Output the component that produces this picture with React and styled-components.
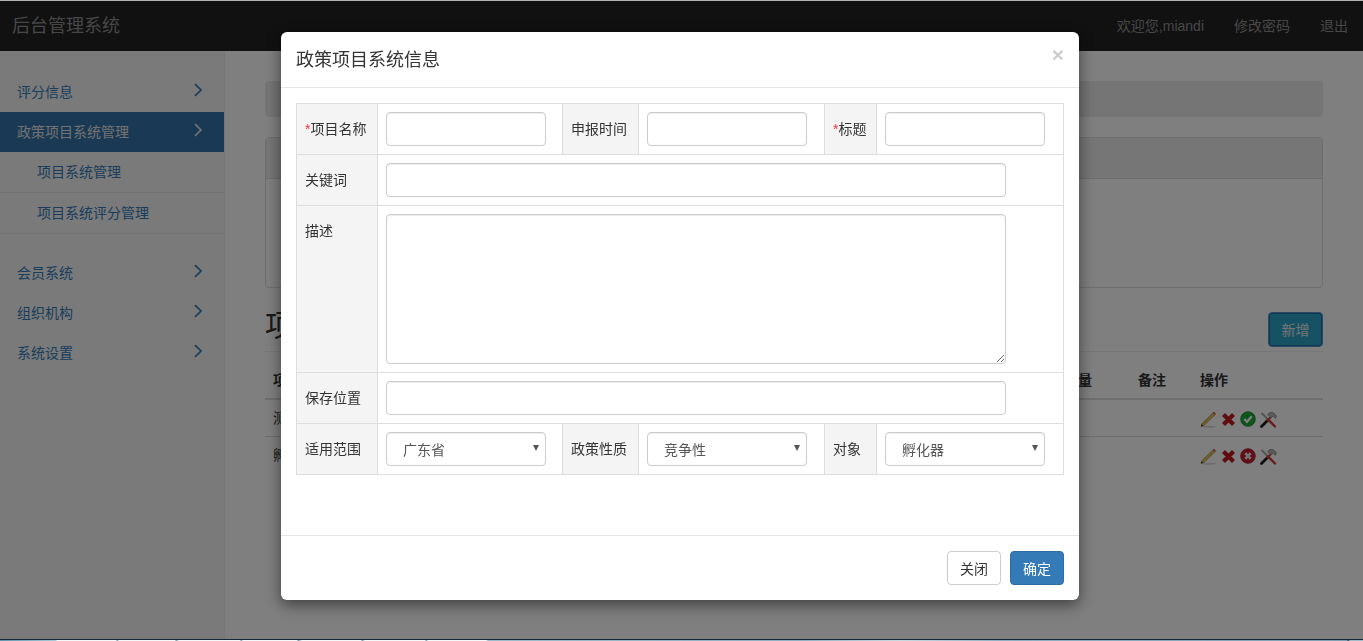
import React from 'react';
import styled, { createGlobalStyle } from 'styled-components';

const FONT = '"Liberation Sans", "Noto Sans CJK SC", sans-serif';

const GlobalStyle = createGlobalStyle`
  * {
    box-sizing: border-box;
  }
  html, body {
    margin: 0;
    height: 100%;
    overflow: hidden;
  }
  body {
    font-family: ${FONT};
    font-size: 14px;
    line-height: 20px;
    color: #333;
    background: #fff;
  }
`;

const TopEdge = styled.div`
  height: 1px;
  background: #b4b4b4;
`;

const Navbar = styled.header`
  display: flex;
  align-items: center;
  justify-content: space-between;
  height: 50px;
  background: #222;
`;

const Brand = styled.div`
  padding-left: 12px;
  font-size: 18px;
  color: #8f8f8f;
`;

const NavLinks = styled.nav`
  display: flex;
`;

const NavLink = styled.a`
  padding: 0 15px;
  color: #8f8f8f;
`;

const Layout = styled.div`
  display: flex;
  height: 588px;
`;

const Sidebar = styled.aside`
  flex: 0 0 225px;
  padding-top: 21px;
  background: #f5f5f5;
  border-right: 1px solid #eee;
`;

const SideItem = styled.a`
  display: flex;
  align-items: center;
  justify-content: space-between;
  height: 40px;
  padding: 0 21px 0 17px;
  color: ${(p) => (p.$active ? '#e4e4e4' : '#337ab7')};
  background: ${(p) => (p.$active ? '#3272a8' : 'transparent')};
`;

const ChevronMark = styled.svg`
  margin-top: -4px;
`;

const SubList = styled.div`
  margin-bottom: 19px;
`;

const SubItem = styled.a`
  display: flex;
  align-items: center;
  height: 41px;
  padding-left: 37px;
  color: #337ab7;
  border-bottom: 1px solid #e7e7e7;
`;

const Main = styled.main`
  flex: 1;
  padding: 30px 40px 0;
`;

const Breadcrumb = styled.div`
  height: 36px;
  margin-bottom: 20px;
  background: #eaeaea;
  border-radius: 4px;
`;

const Panel = styled.section`
  height: 151px;
  border: 1px solid #ddd;
  border-radius: 4px;
`;

const PanelHeading = styled.div`
  height: 41px;
  background: #ececec;
  border-bottom: 1px solid #ddd;
`;

const PageHeader = styled.div`
  display: flex;
  align-items: flex-start;
  justify-content: space-between;
  height: 64px;
  margin-bottom: 10px;
  padding-top: 18px;
  border-bottom: 1px solid #eee;
`;

const PageTitle = styled.h1`
  margin: 0;
  font-size: 30px;
  font-weight: 400;
  line-height: 40px;
`;

const AddButton = styled.button`
  width: 55px;
  height: 35px;
  margin-top: 6px;
  padding: 0;
  font: inherit;
  color: #e8e8e8;
  background: #2ea5c8;
  border: 1px solid #5b8fd0;
  border-radius: 4px;
  box-shadow: inset 0 0 0 1px #1f6fa0;
`;

const DataTable = styled.table`
  width: 100%;
  border-collapse: collapse;
  table-layout: fixed;
`;

const HeadCell = styled.th`
  width: ${(p) => p.$width}px;
  padding: 8px;
  font-weight: 700;
  text-align: left;
  border-bottom: 2px solid #ddd;
`;

const BodyCell = styled.td`
  height: 37px;
  padding: 8px;
  border-top: 1px solid #ddd;
  &:empty {
    padding: 0;
  }
`;

const ActionIcons = styled.div`
  display: flex;
  align-items: center;
  gap: 4px;
  margin-top: 2px;
`;

const Overlay = styled.div`
  position: fixed;
  inset: 1px 0 2px;
  background: rgba(0, 0, 0, 0.5);
`;

const Modal = styled.div`
  position: absolute;
  top: 31px;
  left: 281px;
  display: flex;
  flex-direction: column;
  width: 798px;
  height: 568px;
  background: #fff;
  border-radius: 6px;
  box-shadow: 0 5px 15px rgba(0, 0, 0, 0.5);
`;

const ModalHeader = styled.div`
  display: flex;
  align-items: center;
  justify-content: space-between;
  height: 56px;
  padding: 0 15px;
  border-bottom: 1px solid #e5e5e5;
`;

const ModalTitle = styled.h4`
  margin: 0;
  font-size: 18px;
  font-weight: 400;
`;

const CloseMark = styled.span`
  margin: -10px 0 0;
  font-size: 21px;
  font-weight: 700;
  color: #000;
  opacity: 0.2;
`;

const ModalBody = styled.div`
  flex: 1;
  padding: 15px;
`;

const FormTable = styled.table`
  width: 767px;
  border-collapse: collapse;
  table-layout: fixed;
`;

const Cell = styled.td`
  padding: 8px;
  vertical-align: top;
  border: 1px solid #ddd;
`;

const LabelCell = styled(Cell)`
  background: #f4f4f4;
`;

const Label = styled.div`
  padding-top: 7px;
  white-space: nowrap;
`;

const Required = styled.span`
  color: #e33;
`;

const fieldStyle = `
  display: block;
  height: 34px;
  padding: 6px 12px;
  font-family: ${FONT};
  font-size: 14px;
  color: #555;
  background: #fff;
  border: 1px solid #ccc;
  border-radius: 4px;
  box-shadow: inset 0 1px 1px rgba(0, 0, 0, 0.075);
`;

const Input = styled.input`
  ${fieldStyle}
  width: ${(p) => (p.$wide ? 620 : 160)}px;
`;

const TextArea = styled.textarea`
  ${fieldStyle}
  width: 620px;
  height: 150px;
  resize: vertical;
`;

const SelectWrap = styled.div`
  position: relative;
  width: 160px;
  &::after {
    content: '';
    position: absolute;
    top: 13px;
    right: 7px;
    border-style: solid;
    border-width: 6px 3.5px 0;
    border-color: #555 transparent transparent;
    pointer-events: none;
  }
`;

const Select = styled.select`
  ${fieldStyle}
  width: 160px;
  padding: 8px 12px 6px 16px;
  appearance: none;
`;

const ModalFooter = styled.div`
  display: flex;
  justify-content: flex-end;
  gap: 9px;
  height: 65px;
  padding: 15px;
  border-top: 1px solid #e5e5e5;
`;

const Button = styled.button`
  width: 54px;
  height: 34px;
  padding: 0;
  font-family: ${FONT};
  font-size: 14px;
  color: ${(p) => (p.$primary ? '#fff' : '#333')};
  background: ${(p) => (p.$primary ? '#337ab7' : '#fff')};
  border: 1px solid ${(p) => (p.$primary ? '#2e6da4' : '#ccc')};
  border-radius: 4px;
`;

// sliver of the desktop taskbar along the bottom edge of the capture
const TaskStrip = styled.div`
  position: fixed;
  left: 0;
  right: 0;
  bottom: 0;
  height: 2px;
  border-top: 1px solid #16283a;
  background: linear-gradient(
    to right,
    #5f95ad 0,
    #a9cbd8 56px,
    #f4f8f9 57px,
    #f4f8f9 116px,
    #6f8fa0 117px,
    #f4f8f9 119px,
    #f4f8f9 175px,
    #6f8fa0 176px,
    #f4f8f9 179px,
    #f4f8f9 240px,
    #6f8fa0 241px,
    #f4f8f9 243px,
    #f4f8f9 297px,
    #6f8fa0 298px,
    #f4f8f9 302px,
    #f4f8f9 361px,
    #6f8fa0 362px,
    #f4f8f9 365px,
    #f4f8f9 425px,
    #6f8fa0 426px,
    #f4f8f9 428px,
    #f4f8f9 486px,
    #9dbccb 488px,
    #8fb0c2 800px,
    #c9d9e0 900px,
    #8fb0c2 1000px,
    #7f9fb2 1347px,
    #2a3a48 1348px,
    #a0bccb 1350px
  );
`;

const Chevron = () => (
  <ChevronMark width="10" height="14" viewBox="0 0 10 14" fill="none">
    <path d="M2 1.2 L8 7 L2 12.8" stroke="currentColor" strokeWidth="1.7" />
  </ChevronMark>
);

const PencilIcon = () => (
  <svg width="17" height="17" viewBox="0 0 17 17">
    <ellipse cx="9" cy="15.8" rx="7" ry="1" fill="#000" opacity="0.15" />
    <path d="M1 15.5 L2 12.5 L13 1.8 L15 3.8 L4 14.5 Z" fill="#d9bf5c" stroke="#85701f" strokeWidth="0.5" />
    <path d="M13 1.8 L14 0.8 L16 2.8 L15 3.8 Z" fill="#d9433f" />
    <path d="M1 15.5 L1.7 13.3 L3.2 14.8 Z" fill="#222" />
  </svg>
);

const CrossIcon = () => (
  <svg width="15" height="15" viewBox="0 0 15 15">
    <path d="M1.5 4 L4 1.5 L7.5 5 L11 1.5 L13.5 4 L10 7.5 L13.5 11 L11 13.5 L7.5 10 L4 13.5 L1.5 11 L5 7.5 Z" fill="#c8141e" stroke="#9c0f16" strokeWidth="0.8" strokeLinejoin="round" />
  </svg>
);

const StatusIcon = ({ ok }) => (
  <svg width="16" height="16" viewBox="0 0 16 16">
    <circle cx="8" cy="8" r="7.3" fill={ok ? '#1fa83a' : '#c81e2c'} stroke={ok ? '#14802a' : '#9c1420'} strokeWidth="0.8" />
    {ok ? (
      <path d="M4.3 8 L7 10.8 L11.8 5.3" fill="none" stroke="#fff" strokeWidth="2.2" />
    ) : (
      <path d="M5.2 5.2 L10.8 10.8 M10.8 5.2 L5.2 10.8" fill="none" stroke="#e8e8e8" strokeWidth="2.4" />
    )}
  </svg>
);

const ToolsIcon = () => (
  <svg width="17" height="17" viewBox="0 0 17 17">
    <path d="M1.5 2 L8 8.5" stroke="#a8a8a8" strokeWidth="2" />
    <path d="M8 8.5 L15 15.5" stroke="#d63a3a" strokeWidth="2.4" strokeLinecap="round" />
    <path d="M1.5 15.5 L7 10" stroke="#1c1c1c" strokeWidth="2.8" strokeLinecap="round" />
    <path d="M7 10 L11 6" stroke="#d63a3a" strokeWidth="2.2" />
    <path d="M7.5 3.5 C10 0.3 13.5 0.5 16.5 5 L15.5 7.5 L13 5.2 L10.5 6.8 Z" fill="#b4b4b4" stroke="#6a6a6a" strokeWidth="0.5" />
  </svg>
);

const Actions = ({ ok }) => (
  <ActionIcons>
    <PencilIcon />
    <CrossIcon />
    <StatusIcon ok={ok} />
    <ToolsIcon />
  </ActionIcons>
);

const columns = [
  { title: '项目名称', width: 110 },
  { title: '', width: 681 },
  { title: '数量', width: 74 },
  { title: '备注', width: 62 },
  { title: '操作', width: 131 },
];

const rows = [
  { name: '测试项目', ok: true },
  { name: '孵化项目', ok: false },
];

const Field = ({ label, required, children }) => (
  <>
    <LabelCell>
      <Label>
        {required && <Required>*</Required>}
        {label}
      </Label>
    </LabelCell>
    <Cell>{children}</Cell>
  </>
);

const Picker = ({ value }) => (
  <SelectWrap>
    <Select defaultValue={value}>
      <option>{value}</option>
    </Select>
  </SelectWrap>
);

export default function App() {
  return (
    <>
      <GlobalStyle />
      <TopEdge />
      <Navbar>
        <Brand>后台管理系统</Brand>
        <NavLinks>
          <NavLink>欢迎您,miandi</NavLink>
          <NavLink>修改密码</NavLink>
          <NavLink>退出</NavLink>
        </NavLinks>
      </Navbar>
      <Layout>
        <Sidebar>
          <SideItem>评分信息<Chevron /></SideItem>
          <SideItem $active>政策项目系统管理<Chevron /></SideItem>
          <SubList>
            <SubItem>项目系统管理</SubItem>
            <SubItem>项目系统评分管理</SubItem>
          </SubList>
          <SideItem>会员系统<Chevron /></SideItem>
          <SideItem>组织机构<Chevron /></SideItem>
          <SideItem>系统设置<Chevron /></SideItem>
        </Sidebar>
        <Main>
          <Breadcrumb />
          <Panel>
            <PanelHeading />
          </Panel>
          <PageHeader>
            <PageTitle>项目系统管理</PageTitle>
            <AddButton>新增</AddButton>
          </PageHeader>
          <DataTable>
            <thead>
              <tr>
                {columns.map((col) => (
                  <HeadCell key={col.width} $width={col.width}>{col.title}</HeadCell>
                ))}
              </tr>
            </thead>
            <tbody>
              {rows.map((row) => (
                <tr key={row.name}>
                  <BodyCell>{row.name}</BodyCell>
                  <BodyCell />
                  <BodyCell />
                  <BodyCell />
                  <BodyCell><Actions ok={row.ok} /></BodyCell>
                </tr>
              ))}
            </tbody>
          </DataTable>
        </Main>
      </Layout>
      <Overlay>
        <Modal>
          <ModalHeader>
            <ModalTitle>政策项目系统信息</ModalTitle>
            <CloseMark>×</CloseMark>
          </ModalHeader>
          <ModalBody>
            <FormTable>
              <colgroup>
                <col width="81" />
                <col width="185" />
                <col width="76" />
                <col width="186" />
                <col width="52" />
                <col width="187" />
              </colgroup>
              <tbody>
                <tr>
                  <Field label="项目名称" required><Input /></Field>
                  <Field label="申报时间"><Input /></Field>
                  <Field label="标题" required><Input /></Field>
                </tr>
                <tr>
                  <LabelCell><Label>关键词</Label></LabelCell>
                  <Cell colSpan={5}><Input $wide /></Cell>
                </tr>
                <tr>
                  <LabelCell><Label>描述</Label></LabelCell>
                  <Cell colSpan={5}><TextArea /></Cell>
                </tr>
                <tr>
                  <LabelCell><Label>保存位置</Label></LabelCell>
                  <Cell colSpan={5}><Input $wide /></Cell>
                </tr>
                <tr>
                  <Field label="适用范围"><Picker value="广东省" /></Field>
                  <Field label="政策性质"><Picker value="竞争性" /></Field>
                  <Field label="对象"><Picker value="孵化器" /></Field>
                </tr>
              </tbody>
            </FormTable>
          </ModalBody>
          <ModalFooter>
            <Button>关闭</Button>
            <Button $primary>确定</Button>
          </ModalFooter>
        </Modal>
      </Overlay>
      <TaskStrip />
    </>
  );
}
